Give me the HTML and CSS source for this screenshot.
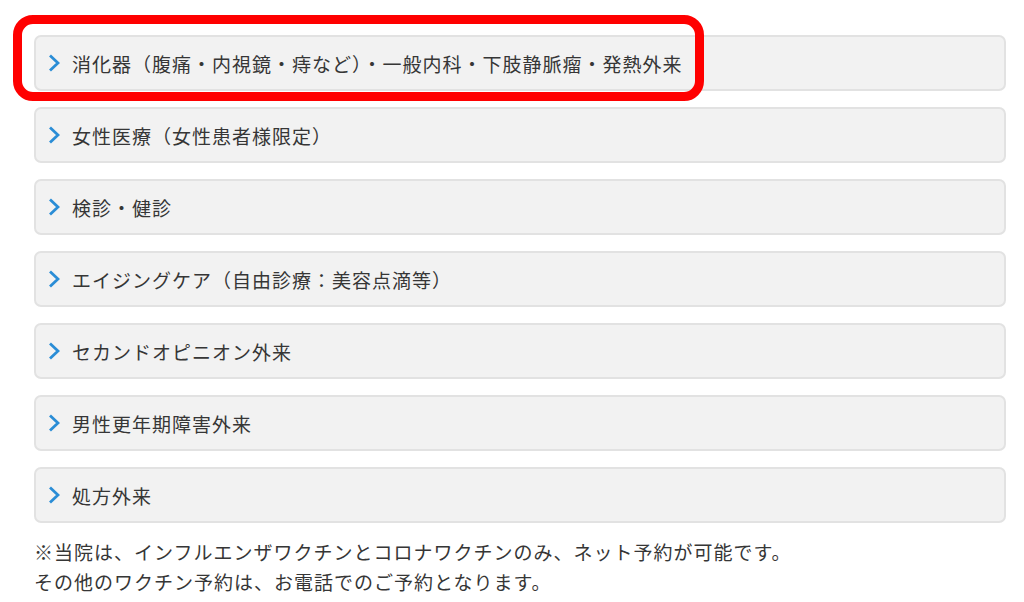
FILE: index.html
```html
<!DOCTYPE html>
<html lang="ja">
<head>
    <meta charset="UTF-8">
    <meta name="viewport" content="width=device-width, initial-scale=1.0">
    <title>診療メニュー</title>
    <link rel="stylesheet" href="styles.css">
</head>
<body>
    <div class="container">
        <ul class="menu">
            <li class="item marked">
                <svg class="chev" viewBox="0 0 12 18"><path d="M2 1.5 L10 9 L2 16.5" /></svg>
                <span>消化器（腹痛・内視鏡・痔など）・一般内科・下肢静脈瘤・発熱外来</span>
            </li>
            <li class="item">
                <svg class="chev" viewBox="0 0 12 18"><path d="M2 1.5 L10 9 L2 16.5" /></svg>
                <span>女性医療（女性患者様限定）</span>
            </li>
            <li class="item">
                <svg class="chev" viewBox="0 0 12 18"><path d="M2 1.5 L10 9 L2 16.5" /></svg>
                <span>検診・健診</span>
            </li>
            <li class="item">
                <svg class="chev" viewBox="0 0 12 18"><path d="M2 1.5 L10 9 L2 16.5" /></svg>
                <span>エイジングケア（自由診療：美容点滴等）</span>
            </li>
            <li class="item">
                <svg class="chev" viewBox="0 0 12 18"><path d="M2 1.5 L10 9 L2 16.5" /></svg>
                <span>セカンドオピニオン外来</span>
            </li>
            <li class="item">
                <svg class="chev" viewBox="0 0 12 18"><path d="M2 1.5 L10 9 L2 16.5" /></svg>
                <span>男性更年期障害外来</span>
            </li>
            <li class="item">
                <svg class="chev" viewBox="0 0 12 18"><path d="M2 1.5 L10 9 L2 16.5" /></svg>
                <span>処方外来</span>
            </li>
        </ul>
        <p class="note">※当院は、インフルエンザワクチンとコロナワクチンのみ、ネット予約が可能です。<br>その他のワクチン予約は、お電話でのご予約となります。</p>
    </div>
</body>
</html>
```

FILE: styles.css
```css
body {
    margin: 0;
    padding: 0;
    background: #fff;
    color: #363636;
    font-family: "Noto Sans CJK JP", "Noto Sans", sans-serif;
}
.container {
    padding: 35px 18px 0 34px;
}
.menu {
    list-style: none;
    margin: 0;
    padding: 0;
    display: flex;
    flex-direction: column;
    gap: 16px;
}
.item {
    position: relative;
    display: flex;
    align-items: center;
    height: 56px;
    box-sizing: border-box;
    padding-left: 12px;
    background: #f2f2f2;
    border: 2px solid #e2e2e2;
    border-radius: 7px;
    font-size: 19px;
    letter-spacing: 1px;
}
.chev {
    width: 12px;
    height: 18px;
    margin-right: 12px;
    fill: none;
    stroke: #2a8dd6;
    stroke-width: 2.8;
}
.marked::after {
    content: "";
    position: absolute;
    left: -23px;
    top: -22px;
    width: 691px;
    height: 86px;
    border: 9px solid #ff0000;
    border-radius: 20px;
    box-sizing: border-box;
}
.note {
    margin: 14px 0 0;
    font-size: 19px;
    letter-spacing: 1px;
    line-height: 30px;
}
```
